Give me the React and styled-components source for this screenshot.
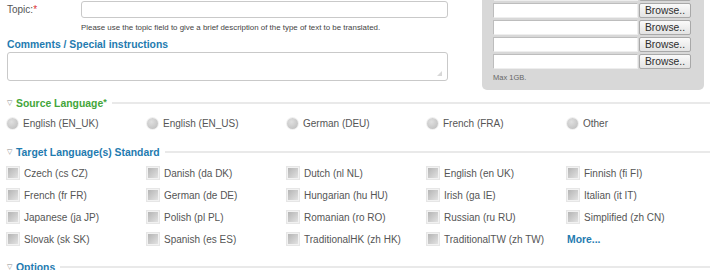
import styled, { createGlobalStyle } from "styled-components";

const Global = createGlobalStyle`
    body {
        margin: 0;
        background: #fff;
        font-family: "Liberation Sans", Arial, sans-serif;
        color: #555;
        overflow: hidden;
    }
`

const Page = styled.div`
    width: 710px;
    height: 270px;
    overflow: hidden;
    padding-left: 7px;
    box-sizing: border-box;
`

const TopRow = styled.div`
    display: flex;
    align-items: flex-start;
    height: 92px;
`

const LeftCol = styled.div`
    width: 441px;
    padding-top: 1px;
`

const FieldRow = styled.div`
    display: flex;
    align-items: center;
`

const Label = styled.div`
    width: 74px;
    font-size: 10px;
    color: #555;

    span {
        color: #d33;
    }
`

const TextInput = styled.div`
    flex: 1;
    height: 15px;
    border: 1px solid #c9c9c9;
    border-radius: 3px;
    background: #fff;
`

const Help = styled.div`
    margin: 5px 0 0 74px;
    font-size: 7.9px;
    line-height: 9px;
    color: #444;
`

const SectionTitle = styled.div`
    margin-top: 7px;
    font-size: 10.4px;
    line-height: 12px;
    font-weight: bold;
    color: #1f7bb0;
`

const TextArea = styled.div`
    position: relative;
    margin-top: 1px;
    height: 27px;
    border: 1px solid #c9c9c9;
    border-radius: 3px;
    background: #fff;

    &::after {
        content: "";
        position: absolute;
        right: 5px;
        bottom: 4px;
        width: 5px;
        height: 5px;
        background: radial-gradient(circle, #aaa 0.6px, transparent 0.8px) 0 0 / 2px 2px;
        clip-path: polygon(100% 0, 100% 100%, 0 100%);
    }
`

const UploadBox = styled.div`
    margin-left: 34px;
    margin-top: -14px;
    width: 222px;
    height: 104px;
    box-sizing: border-box;
    padding: 0 12px 0 11px;
    background: #d8d8d8;
    border-radius: 5px;
`

const UploadRow = styled.div`
    display: flex;
    gap: 1px;
    margin-bottom: 2px;
`

const FileField = styled.div`
    width: 143px;
    height: 13px;
    background: #fff;
    border: 1px solid #bdbdbd;
    border-right-color: #eee;
    border-bottom-color: #eee;
`

const BrowseButton = styled.div`
    width: 50px;
    height: 13px;
    border: 1px solid #a8a8a8;
    border-radius: 2px;
    background: linear-gradient(#fafafa, #e3e3e3);
    font-size: 10.3px;
    line-height: 13px;
    text-align: center;
    color: #2d2d2d;
`

const MaxNote = styled.div`
    margin-top: 4px;
    font-size: 7.5px;
    color: #666;
`

const Legend = styled.div`
    display: flex;
    align-items: center;
    gap: 3px;
    height: 14px;
    margin-top: ${p => p.$top}px;
    font-size: 10.4px;
    font-weight: bold;
    color: ${p => p.$color};

    &::after {
        content: "";
        flex: 1;
        height: 2px;
        margin-left: 2px;
        background: #e9e9e9;
    }

    sup {
        font-size: 9px;
        vertical-align: 2px;
    }
`

const Triangle = styled.span`
    font-size: 7px;
    font-weight: normal;
    color: #888;
    width: 6px;
`

const Grid = styled.div`
    display: grid;
    grid-template-columns: repeat(5, 140px);
    row-gap: ${p => p.$gap}px;
    margin-top: ${p => p.$top}px;
`

const Option = styled.div`
    display: flex;
    align-items: center;
    gap: 5px;
    height: 14px;
    font-size: 10px;
    color: #555;
    white-space: nowrap;
`

const Radio = styled.span`
    width: 11px;
    height: 11px;
    border-radius: 50%;
    background: radial-gradient(circle at 40% 35%, #e0e0e0, #bababa);
    box-shadow: 0 0 0 1px #f0f0f0;
`

const Check = styled.span`
    width: 10px;
    height: 10px;
    background: linear-gradient(135deg, #b4b4b4, #e2e2e2);
    border: 1px solid #f2f2f2;
    box-shadow: 0 0 0 1px #e6e6e6;
`

const More = styled.span`
    font-size: 10.4px;
    font-weight: bold;
    color: #1f7bb0;
`

const sources = ["English (EN_UK)", "English (EN_US)", "German (DEU)", "French (FRA)", "Other"]

const targets = [
    "Czech (cs CZ)", "Danish (da DK)", "Dutch (nl NL)", "English (en UK)", "Finnish (fi FI)",
    "French (fr FR)", "German (de DE)", "Hungarian (hu HU)", "Irish (ga IE)", "Italian (it IT)",
    "Japanese (ja JP)", "Polish (pl PL)", "Romanian (ro RO)", "Russian (ru RU)", "Simplified (zh CN)",
    "Slovak (sk SK)", "Spanish (es ES)", "TraditionalHK (zh HK)", "TraditionalTW (zh TW)",
]

export default function App() {
    return (
        <Page>
            <Global />
            <TopRow>
                <LeftCol>
                    <FieldRow>
                        <Label>Topic:<span>*</span></Label>
                        <TextInput />
                    </FieldRow>
                    <Help>Please use the topic field to give a brief description of the type of text to be translated.</Help>
                    <SectionTitle>Comments / Special instructions</SectionTitle>
                    <TextArea />
                </LeftCol>
                <UploadBox>
                    {[0, 1, 2, 3, 4].map(i => (
                        <UploadRow key={i}>
                            <FileField />
                            {/* the first row is scrolled off the top, only its lower edge shows */}
                            <BrowseButton>{i > 0 && "Browse.."}</BrowseButton>
                        </UploadRow>
                    ))}
                    <MaxNote>Max 1GB.</MaxNote>
                </UploadBox>
            </TopRow>

            <Legend $top={4} $color="#43a63a">
                <Triangle>▽</Triangle><span>Source Language<sup>*</sup></span>
            </Legend>
            <Grid $top={6} $gap={0}>
                {sources.map(s => (
                    <Option key={s}><Radio />{s}</Option>
                ))}
            </Grid>

            <Legend $top={15} $color="#1f7bb0">
                <Triangle>▽</Triangle>Target Language(s) Standard
            </Legend>
            <Grid $top={7} $gap={8}>
                {targets.map(t => (
                    <Option key={t}><Check />{t}</Option>
                ))}
                <Option><More>More...</More></Option>
            </Grid>

            <Legend $top={14} $color="#1f7bb0">
                <Triangle>▽</Triangle>Options
            </Legend>
        </Page>
    );
}
